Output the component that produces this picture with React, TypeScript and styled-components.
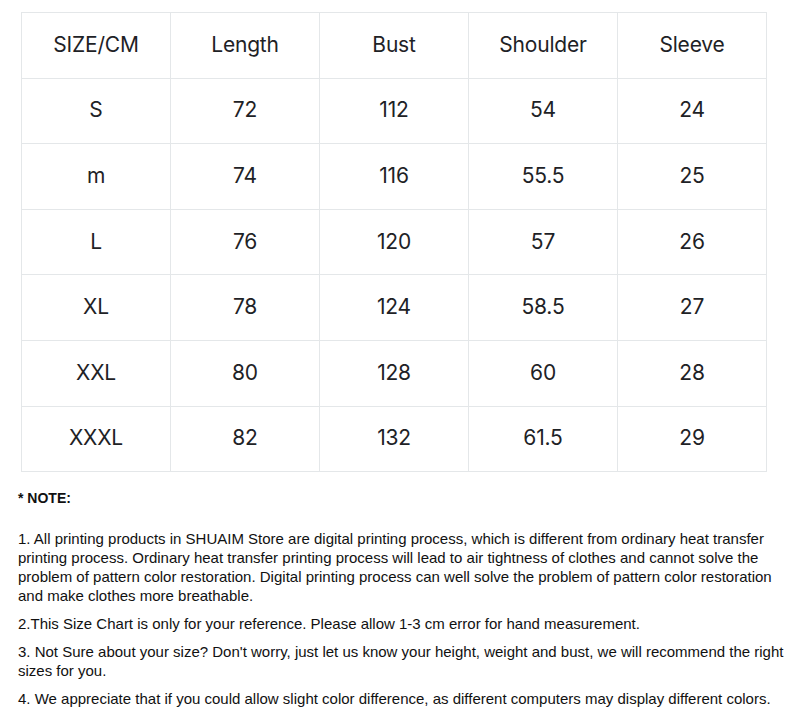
import styled, { createGlobalStyle } from 'styled-components'

const GlobalStyle = createGlobalStyle`
  body {
    margin: 0;
    background: #fff;
  }
`

const HEADERS = ['SIZE/CM', 'Length', 'Bust', 'Shoulder', 'Sleeve']

const ROWS = [
  ['S', '72', '112', '54', '24'],
  ['m', '74', '116', '55.5', '25'],
  ['L', '76', '120', '57', '26'],
  ['XL', '78', '124', '58.5', '27'],
  ['XXL', '80', '128', '60', '28'],
  ['XXXL', '82', '132', '61.5', '29'],
]

const NOTES = [
  '1. All printing products in SHUAIM Store are digital printing process, which is different from ordinary heat transfer printing process. Ordinary heat transfer printing process will lead to air tightness of clothes and cannot solve the problem of pattern color restoration. Digital printing process can well solve the problem of pattern color restoration and make clothes more breathable.',
  '2.This Size Chart is only for your reference. Please allow 1-3 cm error for hand measurement.',
  "3. Not Sure about your size? Don't worry, just let us know your height, weight and bust, we will recommend the right sizes for you.",
  '4. We appreciate that if you could allow slight color difference, as different computers may display different colors.',
]

export default function App() {
  return (
    <Page>
      <GlobalStyle />
      <Chart>
        {HEADERS.map((h) => (
          <Cell key={h}>{h}</Cell>
        ))}
        {ROWS.map((row) =>
          row.map((v, i) => <Cell key={row[0] + i}>{v}</Cell>)
        )}
      </Chart>
      <Notes>
        <NoteTitle>* NOTE:</NoteTitle>
        {NOTES.map((n) => (
          <Para key={n}>{n}</Para>
        ))}
      </Notes>
    </Page>
  )
}

const Page = styled.div`
  width: 790px;
  padding-top: 12px;
  box-sizing: border-box;
`

const Chart = styled.div`
  display: grid;
  grid-template-columns: repeat(5, 149px);
  grid-auto-rows: 65.6px;
  margin-left: 21px;
  width: max-content;
  border-top: 1px solid #e4e7e9;
  border-left: 1px solid #e4e7e9;
`

const Cell = styled.div`
  display: flex;
  align-items: center;
  justify-content: center;
  padding-bottom: 2px;
  border-right: 1px solid #e4e7e9;
  border-bottom: 1px solid #e4e7e9;
  font-family: Inter, 'Liberation Sans', sans-serif;
  font-size: 21px;
  color: #1e2226;
  letter-spacing: -0.2px;
`

const Notes = styled.div`
  padding: 17px 6px 0 18px;
  font-family: 'Liberation Sans', Arial, sans-serif;
  font-size: 15px;
  line-height: 19px;
  color: #111;
`

const NoteTitle = styled.div`
  font-size: 14px;
  font-weight: bold;
  margin-bottom: 21px;
`

const Para = styled.p`
  margin: 0 0 9px;
`
